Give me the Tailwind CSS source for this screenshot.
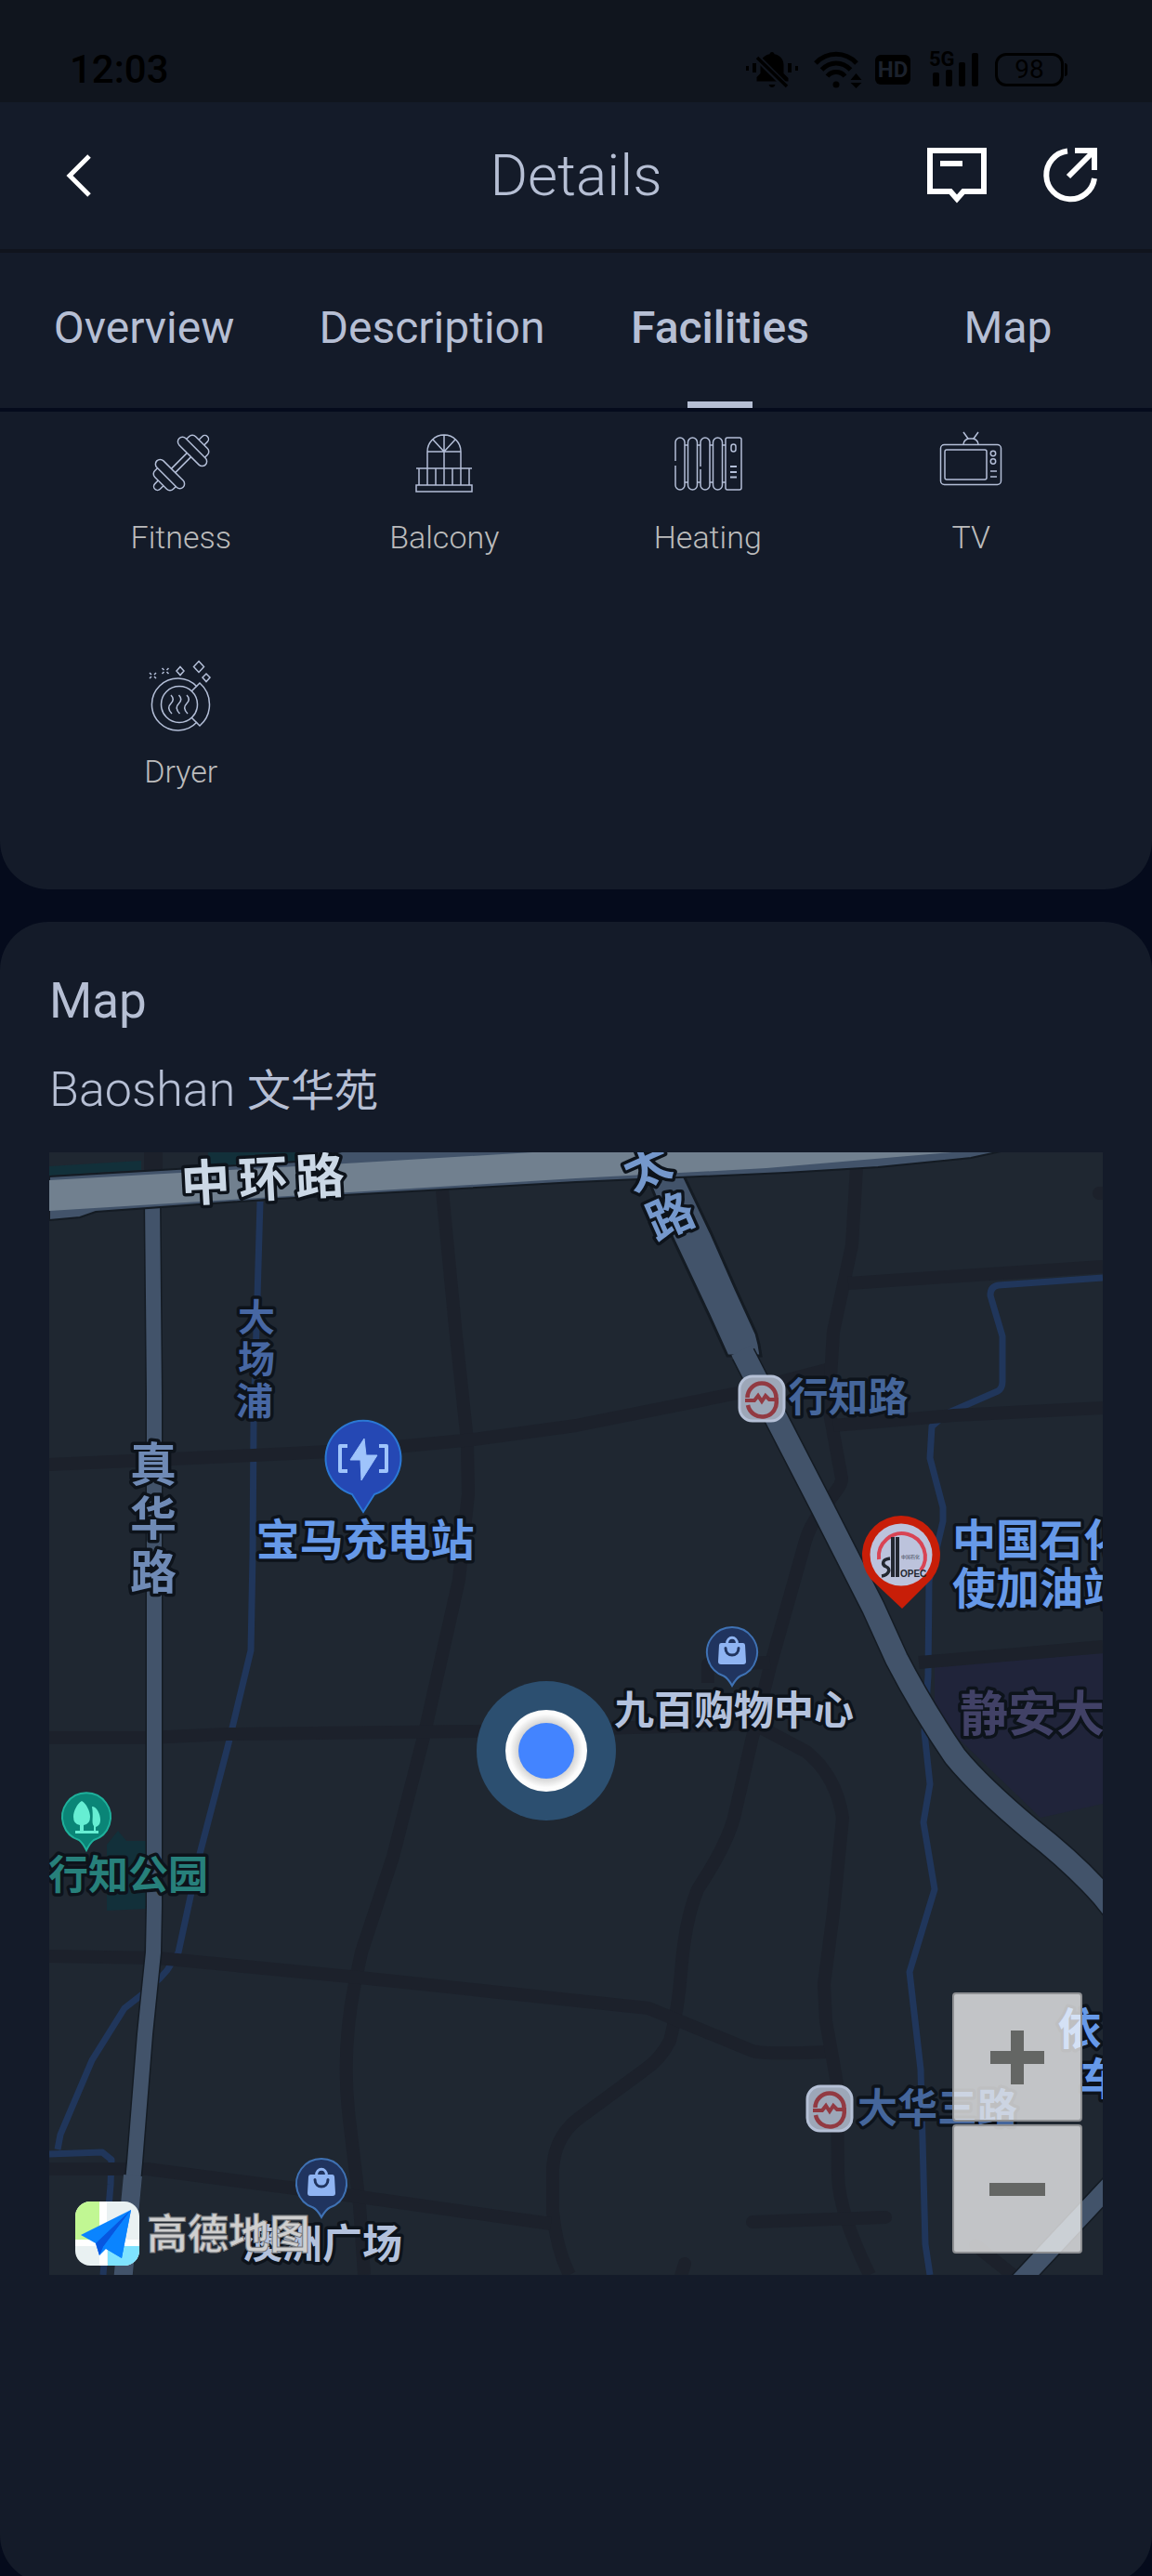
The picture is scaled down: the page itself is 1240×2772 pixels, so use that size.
<!DOCTYPE html>
<html lang="en">
<head>
  <meta charset="UTF-8" />
  <meta name="viewport" content="width=device-width, initial-scale=1" />
  <title>Details</title>
  <script src="https://cdn.jsdelivr.net/npm/@tailwindcss/browser@4"></script>
</head>
<body class="h-screen overflow-hidden bg-[#050b1c] font-['Roboto','Noto_Sans_CJK_SC',sans-serif] text-[#b6bfd4]">

  <!-- Status bar -->
  <div class="flex h-[110px] items-center justify-between bg-[#10151e] pt-10 pr-[91px] pl-[75px] text-black">
    <span class="text-[42px] leading-none font-medium">12:03</span>
    <div class="flex items-center">
      <svg class="h-10 w-14" viewBox="0 0 56 40" fill="currentColor">
        <path d="M28 1c1.500 0 2.500 1 2.500 2.300C37 4.500 40.500 9 40.500 15v9l5 5v3.500H11.500V28l4-4V15c0-6 3.500-10.500 10-11.700C25.500 2 26.500 1 28 1z"/>
        <path d="M24.500 36h7c-.5 2-2 3-3.500 3s-3-1-3.500-3zM0 16h3v5H0zM7 13h4v10H7zM45 13h4v10h-4zM53 16h3v5h-3z"/>
        <path d="M12 7l32 32" stroke="#10151e" stroke-width="7"/>
        <path d="M12 7l32 31" stroke="currentColor" stroke-width="3.500"/>
      </svg>
      <svg class="ml-[17px] h-10 w-[52px]" viewBox="0 0 52 40" fill="none" stroke="currentColor" stroke-width="5">
        <path d="M2 13c12-13 32-13 44 0M8.500 20c9-9.500 22-9.500 31 0M14.500 27c5-6 14-6 19 0"/>
        <circle cx="24" cy="36" r="3.500" fill="currentColor" stroke="none"/>
        <path d="M45.500 24l6 7h-12zM45.500 40l6-6h-12z" fill="currentColor" stroke="none"/>
      </svg>
      <span class="ml-3.5 flex h-8 w-[38px] items-center justify-center rounded-md bg-black text-2xl leading-none font-bold text-[#1b212c]">HD</span>
      <div class="ml-5 flex h-10 w-[54px]">
        <svg class="h-10 w-[54px] shrink-0" viewBox="0 0 54 40" fill="currentColor">
          <rect x="4" y="23" width="7" height="15" rx="2"/><rect x="18" y="20" width="7" height="18" rx="2"/>
          <rect x="32" y="12" width="7" height="26" rx="2"/><rect x="46" y="2" width="7" height="36" rx="2"/>
        </svg>
        <span class="-ml-[54px] text-[22px] leading-[18px] font-bold">5G</span>
      </div>
      <span class="ml-[17px] flex h-9 w-[74px] items-center justify-center rounded-xl border-[3px] border-black text-[28px] leading-none">98</span>
      <span class="ml-px h-3.5 w-[3px] rounded-r bg-black"></span>
    </div>
  </div>

  <!-- Title bar -->
  <header class="grid h-[162px] grid-cols-[1fr_auto_1fr] items-center border-b-4 border-[#10141d] bg-[#141b29] px-[58px]">
    <button type="button" aria-label="Back" class="ml-3 w-8 text-white">
      <svg class="h-12 w-8" viewBox="0 0 32 48" fill="none" stroke="currentColor" stroke-width="5"><path d="M26 3L5 24l21 21"/></svg>
    </button>
    <h1 class="text-[62px] leading-none font-light">Details</h1>
    <div class="flex justify-end gap-[60px] text-white">
      <button type="button" aria-label="Messages">
        <svg class="h-[60px] w-16" viewBox="0 0 64 60" fill="none" stroke="currentColor" stroke-width="6">
          <path d="M3 3h58v44H39l-7 8-7-8H3z" stroke-linejoin="miter"/><path d="M14 17h24"/>
        </svg>
      </button>
      <button type="button" aria-label="Share">
        <svg class="h-[60px] w-[60px]" viewBox="0 0 60 60" fill="none" stroke="currentColor" stroke-width="6">
          <path d="M27 3.500A26 26 0 1 0 56 33M35 3h21v21M56 3L28 31"/>
        </svg>
      </button>
    </div>
  </header>

  <!-- Section tabs -->
  <nav class="grid h-[171px] grid-cols-4 border-b-4 border-[#050b1c] bg-[#141b29] text-center text-[48px] leading-[162px]">
    <a href="#overview">Overview</a>
    <a href="#description">Description</a>
    <a href="#facilities" aria-current="page" class="relative font-medium">Facilities
      <span class="absolute bottom-0 left-1/2 h-[7px] w-[70px] -translate-x-1/2 bg-[#b6bfd4]"></span>
    </a>
    <a href="#map">Map</a>
  </nav>

  <main>
    <!-- Facilities -->
    <section id="facilities" class="rounded-b-[52px] bg-[#141b29] px-[53px] pt-[15px] pb-[107px]">
      <ul class="grid grid-cols-4 gap-y-28 text-[34px] leading-10 font-light text-[#bcbcbc]">
        <li class="flex flex-col items-center gap-5">
          <svg class="size-20 text-[#b4bfd8]" viewBox="-40 -40 80 80" fill="none" stroke="currentColor" stroke-width="1.500">
            <g transform="rotate(-45)">
              <path d="M-12-3h24M-12 3h24"/>
              <rect x="12" y="-20" width="10" height="40" rx="5"/><rect x="-22" y="-20" width="10" height="40" rx="5"/>
              <path d="M22-14h4a5 5 0 0 1 5 5V9a5 5 0 0 1-5 5h-4M-22-14h-4a5 5 0 0 0-5 5V9a5 5 0 0 0 5 5h4"/>
              <path d="M31-4h5a4 4 0 0 1 0 8h-5M-31-4h-5a4 4 0 0 0 0 8h5"/>
            </g>
          </svg>
          Fitness
        </li>
        <li class="flex flex-col items-center gap-5">
          <svg class="size-20 text-[#b4bfd8]" viewBox="0 0 80 80" fill="none" stroke="currentColor" stroke-width="1.500">
            <path d="M22 64V28a18 18 0 0 1 36 0v36M22 28h36M40 10v54M40 28L28 15M40 28l12-13"/>
            <path d="M10 46h60M13 46v18M31 46v18M49 46v18M67 46v18"/><path d="M10 64h60v7H10z"/>
          </svg>
          Balcony
        </li>
        <li class="flex flex-col items-center gap-5">
          <svg class="size-20 text-[#b4bfd8]" viewBox="0 0 80 80" fill="none" stroke="currentColor" stroke-width="1.500">
            <path d="M5 38V18a5 5 0 0 1 10 0v46a5 5 0 0 1-10 0V43"/><rect x="18.500" y="13" width="10" height="56" rx="5"/>
            <path d="M32 44V18a5 5 0 0 1 10 0v46a5 5 0 0 1-10 0V47"/><rect x="45.500" y="13" width="10" height="56" rx="5"/>
            <path d="M15 21h3.500M28.500 21H32M42 21h3.500M55.500 21H59M15 61h3.500M28.500 61H32M42 61h3.500M55.500 61H59"/>
            <rect x="59" y="13" width="17" height="56" rx="2"/><rect x="65" y="20" width="5" height="8" rx="2.500"/>
            <path d="M64 44h7M64 50h7M64 55.500h7" stroke-width="2"/>
          </svg>
          Heating
        </li>
        <li class="flex flex-col items-center gap-5">
          <svg class="size-20 text-[#b4bfd8]" viewBox="0 0 80 80" fill="none" stroke="currentColor" stroke-width="1.500">
            <rect x="7.500" y="20.500" width="65" height="43" rx="4"/><rect x="12" y="26" width="45" height="32" rx="2"/>
            <circle cx="64" cy="30" r="2.700"/><circle cx="64" cy="38.500" r="2.700"/><path d="M61 49h7M61 55h7"/>
            <path d="M32 20c0-3 3-6 6-6h4c3 0 6 3 6 6M37 14l-5-7M43 14l5-7"/>
          </svg>
          TV
        </li>
        <li class="flex flex-col items-center gap-5">
          <svg class="size-20 text-[#b4bfd8]" viewBox="0 0 80 80" fill="none" stroke="currentColor" stroke-width="1.500">
            <path d="M57 29A28 28 0 1 0 57 67"/><circle cx="38" cy="48" r="19.500"/>
            <path d="M51 34l9-9c14 12 14 34 0 46l-9-9"/>
            <path d="M29 38c3 3 3 6 0 9s-3 7 1 11M37.500 38c3 3 3 6 0 9s-3 7 1 11M46 38c3 3 3 6 0 9s-3 7 1 11"/>
            <path d="M39 7.500l4 4.500-4 4.500-4-4.500zM59 1.500l5.500 6-5.500 6-5.500-6zM67 15l4 4-4 4.500-4-4.500z"/>
            <path d="M6 14l2 2M13 14l-2 2M6 20l2-2M13 20l-2-2M19.500 9l2 2M26.500 9l-2 2M19.500 15l2-2M26.500 15l-2-2"/>
          </svg>
          Dryer
        </li>
      </ul>
    </section>

    <!-- Map -->
    <section id="map" class="mt-[35px] rounded-[52px] bg-[#141b29] px-[53px] pt-[55px] pb-[332px]">
      <h2 class="text-[53px] leading-[60px]">Map</h2>
      <p class="mt-9 text-[52px] leading-[60px] font-light">Baoshan <span class="text-[47px] font-normal">文华苑</span></p>

      <div class="relative mt-9 overflow-hidden bg-[#1f2731]">
        <svg class="block w-full" viewBox="53 1239 1134 1208" fill="none">
          <defs>
            <g id="bag">
              <path d="M-9 25.500a27 27 0 1 1 18 0c-4 2-6 5-9 10.500-3-5.500-5-8.500-9-10.500z" fill="#20345f" stroke="#3f72b4" stroke-width="2"/>
              <path d="M-11.500-10h23a2.500 2.500 0 0 1 2.500 2.300L15 10a3 3 0 0 1-3 3h-24a3 3 0 0 1-3-3l1-17.700a2.500 2.500 0 0 1 2.500-2.300z" fill="#8fb4f2"/>
              <path d="M-5.500-9c0-9 11-9 11 0" stroke="#8fb4f2" stroke-width="3"/>
              <path d="M-7-4.500c0 10 14 10 14 0" stroke="#20345f" stroke-width="3" stroke-linecap="round"/>
            </g>
            <g id="metro">
              <rect x="-24" y="-24" width="48" height="48" rx="14" fill="#9da7b8" stroke="#b5c0d6" stroke-width="3"/>
              <g stroke="#923a42" stroke-width="4.500">
                <path d="M-15.500-1a15.500 15.500 0 0 1 31 0M-15 7a15.500 15.500 0 0 0 30.500-6"/>
                <path d="M-18 2h10l4-5 4 6 4-6 4 4h10" stroke-width="4"/>
              </g>
            </g>
          </defs>

          <!-- Green and campus areas -->
          <path d="M53 1254l99-6v10l-99 6zM224 1239h119l-23 10-96 6zM115 1984l12-15 9 11h21v73l-42 2z" fill="#12303a"/>
          <path d="M1006 1792l181-14v162l-67 15-114-110z" fill="#20243a"/>

          <!-- Rivers -->
          <g stroke="#20365b" stroke-width="7" stroke-linejoin="round">
            <path d="M280 1292l-3 103-4 134-1 143-2 103-24 100-31 119-23 106-12 19-8 9-20 18-18 14-35 56-34 80-3 16"/>
            <path d="M53 2317l57-2 10 8-1 27-8 97"/>
            <path d="M1187 1374l-112 8q-9 1-9 11l13 44v49q0 7-5 10l-55 24-16 14-2 34 14 53v15l-15 64-1 102-4 61 6 56-7 41 12 72-27 89 12 105 5 188 5 33"/>
          </g>

          <!-- Minor roads -->
          <g stroke="#1c212b" stroke-width="14" stroke-linejoin="round">
            <path d="M165 1239v20" stroke-width="20"/>
            <path d="M476 1280l14 147 13 123 1 57-10 92-37 165-34 133-34 103-7 33q-14 70-7 138l12 101 5 75"/>
            <path d="M53 1575l220-10 122-6 115-11 110-15 174-35 103-27"/>
            <path d="M53 1869h105l87-4 269-3 252-6 60-3"/>
            <path d="M922 1255l-5 84-20 93-5 82 14 76q0 6-5 12l-20 27q-10 14-14 28l-38 135-19 76-20 87q-8 30-39 77-14 34-18 90-3 40-12 73-10 20-28 32l-68 50q-28 20-30 56v46q4 40 18 68"/>
            <path d="M1187 1362l-274 18M1187 1514l-160 8-130 11M989 1788l198-17"/>
            <path d="M53 2104l117 2 217 21 311 33 112 46q12 4 82 1"/>
            <path d="M819 1858l49 26q32 26 39 71l-10 102-10 77 2 40 12 67 1 97q0 40 34 109"/>
            <path d="M53 2333h105l229 30 206 29M762 1810v-20l67-2"/>
            <path d="M810 2390l143-5M737 2435l-6 20M1183 1283h14M1050 2415l40 32" stroke-linecap="round"/>
          </g>

          <!-- Main roads -->
          <path d="M686 1239l35 86 42 89 20 44h36l-2-12-3-12-22-48-27-61-41-86z" fill="#42536a" stroke="#141b23" stroke-width="3"/>
          <g stroke="#141b23" stroke-width="27" stroke-linejoin="round">
            <path d="M800 1456l38 74 47 91 55 108 25 55q28 54 63 105 26 32 82 79 46 36 77 71l20 25"/>
            <path d="M164 1290l2 210v550l-1 50-9 88-11 138-12 125" stroke-width="19"/>
            <path d="M1200 2345l-103 110" stroke-width="23"/>
          </g>
          <g stroke="#42536a" stroke-width="24" stroke-linejoin="round">
            <path d="M798 1452l40 78 47 91 55 108 25 55q28 54 63 105 26 32 82 79 46 36 77 71l20 25"/>
            <path d="M164 1290l2 210v550l-1 50-9 88-11 138-12 125" stroke-width="16"/>
            <path d="M143 2340l-11 115M1200 2345l-103 110" stroke-width="20"/>
          </g>
          <path d="M53 1265l120-7 147-9 52-12h710l-37 8-100 10-100 6-225 10-320 18-197 14-17 6-33 3z" fill="#42536a" stroke="#141b23" stroke-width="2"/>
          <path d="M53 1269l319-18 201-12h452l-200 17-205 11-567 35z" fill="#71808f"/>

          <!-- Place names -->
          <g class="font-['Noto_Sans_CJK_SC',sans-serif] font-bold [paint-order:stroke]" stroke="#0d131b" stroke-width="7" stroke-linejoin="round" text-anchor="middle" dominant-baseline="central">
            <g font-size="53" fill="#cbd8e6">
              <text transform="translate(221 1268) rotate(-3)">中</text>
              <text transform="translate(283 1264) rotate(-3)">环</text>
              <text transform="translate(344 1261) rotate(-3)">路</text>
            </g>
            <g font-size="50" fill="#7598cc">
              <text transform="translate(695 1251) rotate(-24)">太</text>
              <text transform="translate(720 1304) rotate(-24)">路</text>
            </g>
            <text font-size="40" fill="#4767a3"><tspan x="276" y="1414">大</tspan><tspan x="276" y="1459">场</tspan><tspan x="274" y="1504">浦</tspan></text>
            <text font-size="50" fill="#6f8ab5"><tspan x="165" y="1571">真</tspan><tspan x="165" y="1629">华</tspan><tspan x="165" y="1687">路</tspan></text>
            <g font-size="43">
              <text x="913" y="1499" fill="#45669b">行知路</text>
              <text x="790" y="1836" fill="#b4c2dd">九百购物中心</text>
              <text x="138" y="2013" fill="#27807b">行知公园</text>
              <text x="1009" y="2264" fill="#45669b">大华三路</text>
              <text x="347" y="2410" fill="#b4c2dd">澳洲广场</text>
            </g>
            <g font-size="47" fill="#6699e8">
              <text x="393" y="1652">宝马充电站</text>
              <text x="1119" y="1652">中国石化</text>
              <text x="1119" y="1704">使加油站</text>
              <text x="1162" y="2178">依</text>
              <text x="1186" y="2232">车</text>
            </g>
            <text x="1111" y="1839" font-size="52" fill="#414166">静安大</text>
          </g>

          <!-- Pins -->
          <use href="#metro" x="820" y="1504"/>
          <use href="#metro" x="893" y="2268"/>
          <use href="#bag" x="788" y="1777"/>
          <use href="#bag" x="346" y="2349"/>
          <g transform="translate(391 1568)">
            <path d="M-12 39a40.500 40.500 0 1 1 24 0L0 58z" fill="#2548b4" stroke="#2b78d4" stroke-width="2"/>
            <path d="M-17-13h-8v27h8M17-13h8v27h-8" stroke="#9fc4fb" stroke-width="4" stroke-linejoin="round"/>
            <path d="M1-21l-15 23h11L-2 24 15-3H3z" fill="#9fc4fb" stroke="#9fc4fb" stroke-linejoin="round"/>
          </g>
          <g transform="translate(93 1954)">
            <path d="M-8 25a26 26 0 1 1 16 0q-4 3-8 11-4-8-8-11z" fill="#0a8577" stroke="#1fb09b" stroke-width="2"/>
            <path d="M-5-17c5 3 9 11 9 17q0 8-7 9v6H13v3h-25v-3h5V9q-7-1-7-9c0-6 4-14 9-17z" fill="#66eed3"/>
            <path d="M6-11c5 0 9 8 9 14 0 5-2 7-5 8v5H8V10C5 6 8 1 6-11z" fill="#66eed3"/>
          </g>
          <g transform="translate(970 1672)">
            <path d="M-33 26a42 42 0 1 1 66 0L1 58z" fill="#c81e08"/>
            <circle r="33.500" fill="#bcc3dc"/>
            <path d="M-24 5a25 25 0 1 1 45 12" stroke="#d94454" stroke-width="4"/>
            <path d="M-9-19v43M-4-19v43" stroke="#222730" stroke-width="4"/>
            <path d="M-12 4c-9 1-9 7-4 9s3 9-5 10" stroke="#222730" stroke-width="3.500"/>
            <text x="-1" y="24" class="font-['Liberation_Sans_Narrow','Liberation_Sans',sans-serif] font-bold" font-size="10" fill="#222730">OPEC</text>
            <text x="0" y="4" class="font-['Noto_Sans_CJK_SC',sans-serif]" font-size="5" fill="#444a58">中国石化</text>
          </g>

          <!-- Current position -->
          <radialGradient id="ring"><stop offset="0.650" stop-color="#cfcfcf"/><stop offset="0.900" stop-color="#fcfcfc"/></radialGradient>
          <circle cx="588" cy="1883" r="75" fill="#2c4f70"/>
          <circle cx="588" cy="1883" r="44" fill="url(#ring)"/>
          <circle cx="588" cy="1883" r="30" fill="#4384ff"/>
        </svg>

        <!-- Map provider -->
        <div class="absolute bottom-2.5 left-7 flex items-center gap-2">
          <svg class="size-[69px]" viewBox="0 0 69 69">
            <rect width="69" height="69" rx="16" fill="#e9f1f2"/>
            <path d="M16 0h10v42H0V16A16 16 0 0 1 16 0z" fill="#c1f793"/>
            <path d="M35 48h34v5a16 16 0 0 1-16 16H35z" fill="#7fe3ff"/>
            <path d="M26 0h8v69h-8zM0 41h69v7H0z" fill="#fff"/>
            <path d="M6 36L60 9 50 61 33 51l-7 7-4-13z" fill="#0a84ff"/>
            <path d="M60 9L22 45l4 13 4-9z" fill="#0757e0"/>
            <path d="M60 9L30 49l20 12z" fill="#0a84ff"/>
          </svg>
          <span class="pb-1.5 font-['Noto_Sans_CJK_SC',sans-serif] text-[44px] leading-none font-bold text-[#cfcfcf] [-webkit-text-stroke:1px_#77797d]">高德地图</span>
        </div>

        <!-- Zoom control -->
        <div class="absolute right-[22px] bottom-[23px] flex w-[140px] flex-col gap-[3px] text-[#646664]">
          <button type="button" aria-label="Zoom in" class="flex h-[139px] items-center justify-center rounded border-2 border-[#8d8f92] bg-[#fafafa]/75">
            <svg class="size-[60px]" viewBox="0 0 60 60" stroke="currentColor" stroke-width="14"><path d="M30 1v58M1 30h58"/></svg>
          </button>
          <button type="button" aria-label="Zoom out" class="flex h-[139px] items-center justify-center rounded border-2 border-[#8d8f92] bg-[#fafafa]/75">
            <svg class="size-[60px]" viewBox="0 0 60 60" stroke="currentColor" stroke-width="14"><path d="M0 30h60"/></svg>
          </button>
        </div>
      </div>
    </section>
  </main>
</body>
</html>
